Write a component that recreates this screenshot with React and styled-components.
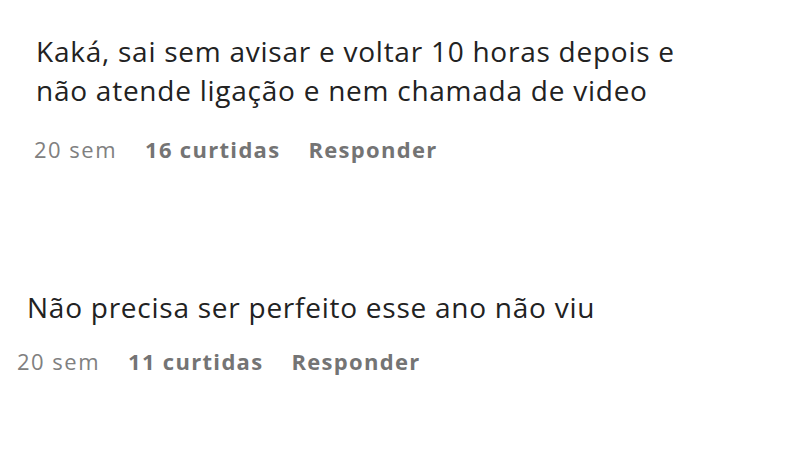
import React from 'react';
import styled, { createGlobalStyle } from 'styled-components';

const GlobalStyle = createGlobalStyle`
    html, body {
        margin: 0;
        padding: 0;
        background: #ffffff;
    }
    body {
        font-family: 'Open Sans', 'Noto Sans', sans-serif;
    }
`;

const Page = styled.div`
    width: 800px;
    height: 450px;
    overflow: hidden;
    background: #ffffff;
    padding-top: 32px;
    box-sizing: border-box;
`;

const Comment = styled.div`
    padding-left: ${props => props.indent}px;
    margin-bottom: ${props => props.gap || 0}px;
`;

const Body = styled.div`
    font-size: 28px;
    line-height: 39px;
    color: #222222;
    letter-spacing: 0.75px;
`;

const Meta = styled.div`
    display: flex;
    align-items: baseline;
    gap: 28px;
    margin-top: ${props => props.top}px;
    margin-left: ${props => props.shift}px;
    font-size: 22px;
    color: #808080;
    letter-spacing: 1.5px;
`;

const Time = styled.span`
    font-weight: 400;
`;

const Action = styled.span`
    font-weight: 700;
    color: #747474;
    letter-spacing: 1.3px;
`;

const comments = [
    {
        lines: [
            'Kaká, sai sem avisar e voltar 10 horas depois e',
            'não atende ligação e nem chamada de video',
        ],
        likes: 16,
        indent: 36,
        metaShift: -2,
        metaTop: 24,
        gap: 124,
    },
    {
        lines: ['Não precisa ser perfeito esse ano não viu'],
        likes: 11,
        indent: 27,
        metaShift: -10,
        metaTop: 19,
        gap: 0,
    },
];

const App = () => (
    <>
        <GlobalStyle />
        <Page>
            {comments.map((c, i) => (
                <Comment key={i} indent={c.indent} gap={c.gap}>
                    <Body>
                        {c.lines.map((l, j) => (
                            <div key={j}>{l}</div>
                        ))}
                    </Body>
                    <Meta top={c.metaTop} shift={c.metaShift}>
                        <Time>20 sem</Time>
                        <Action>{c.likes} curtidas</Action>
                        <Action>Responder</Action>
                    </Meta>
                </Comment>
            ))}
        </Page>
    </>
);

export default App;
